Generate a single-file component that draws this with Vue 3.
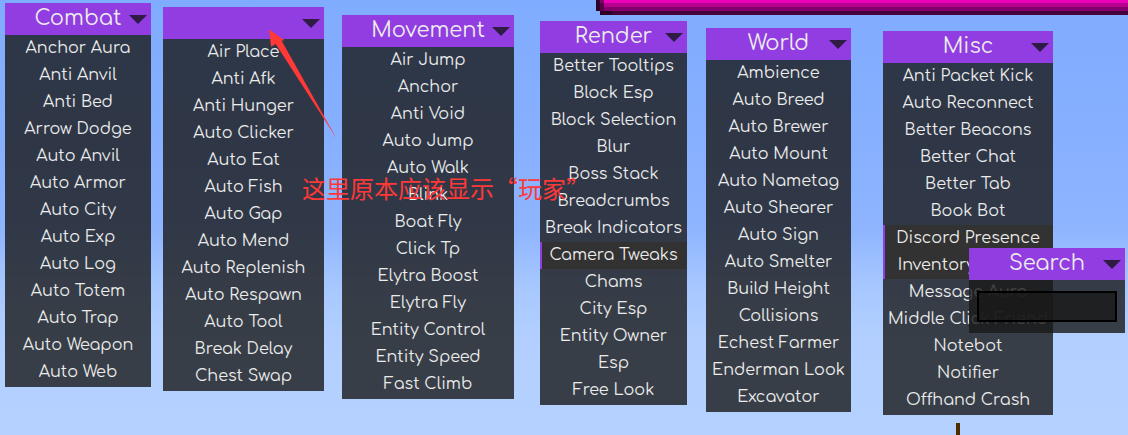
<script setup>
const panels = [
  { id: 'combat', title: 'Combat', x: 5, y: 3, w: 146, modules: ['Anchor Aura', 'Anti Anvil', 'Anti Bed', 'Arrow Dodge', 'Auto Anvil', 'Auto Armor', 'Auto City', 'Auto Exp', 'Auto Log', 'Auto Totem', 'Auto Trap', 'Auto Weapon', 'Auto Web'] },
  { id: 'player', title: '', x: 163, y: 7, w: 161, modules: ['Air Place', 'Anti Afk', 'Anti Hunger', 'Auto Clicker', 'Auto Eat', 'Auto Fish', 'Auto Gap', 'Auto Mend', 'Auto Replenish', 'Auto Respawn', 'Auto Tool', 'Break Delay', 'Chest Swap'] },
  { id: 'movement', title: 'Movement', x: 342, y: 15, w: 172, modules: ['Air Jump', 'Anchor', 'Anti Void', 'Auto Jump', 'Auto Walk', 'Blink', 'Boat Fly', 'Click Tp', 'Elytra Boost', 'Elytra Fly', 'Entity Control', 'Entity Speed', 'Fast Climb'] },
  { id: 'render', title: 'Render', x: 540, y: 21, w: 147, modules: ['Better Tooltips', 'Block Esp', 'Block Selection', 'Blur', 'Boss Stack', 'Breadcrumbs', 'Break Indicators', 'Camera Tweaks', 'Chams', 'City Esp', 'Entity Owner', 'Esp', 'Free Look'] },
  { id: 'world', title: 'World', x: 706, y: 28, w: 145, modules: ['Ambience', 'Auto Breed', 'Auto Brewer', 'Auto Mount', 'Auto Nametag', 'Auto Shearer', 'Auto Sign', 'Auto Smelter', 'Build Height', 'Collisions', 'Echest Farmer', 'Enderman Look', 'Excavator'] },
  { id: 'misc', title: 'Misc', x: 883, y: 31, w: 170, modules: ['Anti Packet Kick', 'Auto Reconnect', 'Better Beacons', 'Better Chat', 'Better Tab', 'Book Bot', 'Discord Presence', 'Inventory Tweaks', 'Message Aura', 'Middle Click Friend', 'Notebot', 'Notifier', 'Offhand Crash'] },
  { id: 'search', title: 'Search', x: 969, y: 248, w: 156, search: true }
]
const active = new Set(['Camera Tweaks', 'Discord Presence', 'Inventory Tweaks'])
const place = (p) => ({ left: p.x + 'px', top: p.y + 'px', width: p.w + 'px' })
</script>

<template>
  <main class="screen">
    <svg class="boss-bar" height="15" width="100%" aria-hidden="true" shape-rendering="crispEdges">
      <rect x="4" width="100%" height="3" fill="#ec00b8" />
      <rect x="4" y="3" width="100%" height="4" fill="#b8008f" />
      <rect x="4" y="7" width="100%" height="4" fill="#84006c" />
      <rect x="4" y="11" width="100%" height="4" fill="#46003b" />
      <rect width="4" height="11" fill="#2d0028" />
      <rect x="4" width="4" height="3" fill="#84006c" />
      <rect x="4" y="3" width="4" height="8" fill="#58004a" />
      <rect x="4" y="11" width="12" height="4" fill="#2d0028" />
    </svg>
    <i class="post"></i>

    <section v-for="p in panels" :key="p.id" class="panel" :style="place(p)">
      <header class="bar">
        <h2 class="title">{{ p.title }}</h2>
        <button class="toggle" type="button" aria-label="Collapse">
          <svg width="18" height="9" viewBox="0 0 18 9"><path d="M0 0H18L9 9Z" fill="#2f1c45" /></svg>
        </button>
      </header>
      <div v-if="p.search" class="search">
        <input class="field" type="text" aria-label="Search" />
      </div>
      <ul v-else class="list">
        <li v-for="m in p.modules" :key="m">
          <button type="button" class="module" :class="{ on: active.has(m) }">{{ m }}</button>
        </li>
      </ul>
    </section>

    <svg class="arrow" width="70" height="112" viewBox="0 0 70 112" aria-hidden="true">
      <path d="M2 1.300L17.500 12.300L14.500 12.500L69.700 110.700L8.700 16L4 18.700Z" fill="#ff3838" />
    </svg>
    <p class="note" lang="zh-CN">这里原本应该显示“玩家”</p>
  </main>
</template>

<style>
body { margin: 0; }
</style>

<style scoped>
.screen {
  position: relative;
  min-height: 100vh;
  overflow: hidden;
  background: linear-gradient(#80acff 0%, #86afff 30%, #8fb5ff 53%, #a7c8ff 66%, #b2cfff 78%, #b5d1ff 100%);
  font-family: Comfortaa, Inter, sans-serif;
  color: #ececec;
}
.boss-bar {
  position: absolute;
  left: 596px;
  top: 0;
}
.post {
  position: absolute;
  left: 956px;
  bottom: 0;
  width: 4px;
  height: 12px;
  background: #4b2d00;
}
.panel { position: absolute; }
.bar {
  position: relative;
  height: 32px;
  background: #913de2;
}
.title {
  margin: 0;
  font-size: 21px;
  font-weight: 400;
  line-height: 30px;
  text-align: center;
}
.toggle {
  position: absolute;
  right: 4px;
  top: 12px;
  display: flex;
  padding: 0;
  border: 0;
  background: none;
}
.list {
  margin: 0;
  padding: 0 0 1px;
  list-style: none;
  background: rgba(25, 25, 25, 0.8);
}
.module {
  display: block;
  width: 100%;
  height: 27px;
  padding: 0;
  border: 0;
  background: none;
  color: inherit;
  font: 400 16px/27px Comfortaa, Inter, sans-serif;
  text-align: center;
  white-space: nowrap;
}
.module.on {
  background: #323232;
  box-shadow: inset 2px 0 #913de2;
}
.search {
  padding: 11px 8px;
  background: rgba(25, 25, 25, 0.8);
}
.field {
  display: block;
  box-sizing: border-box;
  width: 100%;
  height: 31px;
  padding: 0 4px;
  border: 2px solid #000;
  outline: 0;
  background: rgba(25, 25, 25, 0.8);
  color: inherit;
  font: 400 16px Comfortaa, Inter, sans-serif;
}
.arrow {
  position: absolute;
  left: 267px;
  top: 28px;
}
.note {
  position: absolute;
  left: 302px;
  top: 173px;
  margin: 0;
  color: #ff3838;
  font: 24px/30px "Noto Sans CJK SC", sans-serif;
  white-space: nowrap;
}
</style>
